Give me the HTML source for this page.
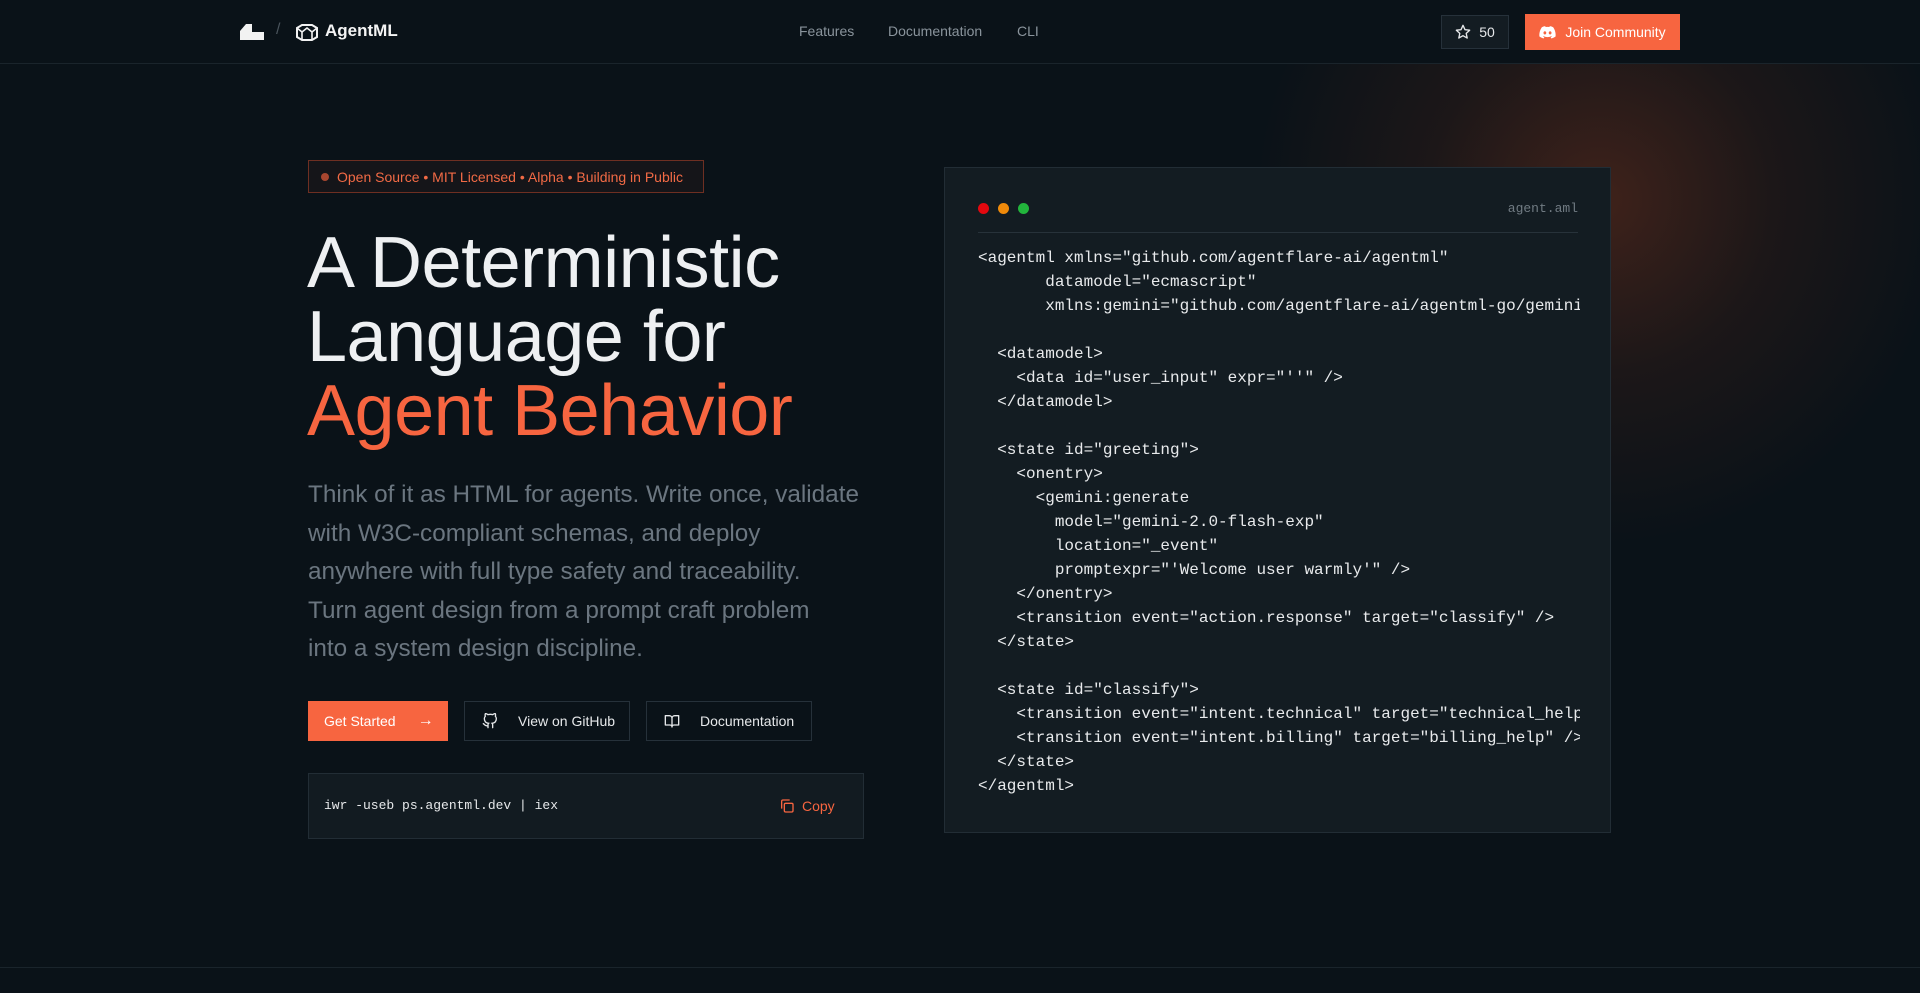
<!DOCTYPE html>
<html><head><meta charset="utf-8"><style>
*{margin:0;padding:0;box-sizing:border-box}
body{width:1920px;height:993px;overflow:hidden;background:#0a1218;font-family:"Liberation Sans",sans-serif;color:#e6e8ea;position:relative}
.glow{position:absolute;left:1250px;top:-150px;width:700px;height:700px;border-radius:50%;background:radial-gradient(circle,rgba(150,60,30,.38) 0%,rgba(110,45,25,.18) 35%,rgba(10,18,24,0) 70%)}
.nav{position:absolute;left:0;top:0;width:1920px;height:64px;border-bottom:1px solid #1a242b;background:#0a1218}
.mono{font-family:"Liberation Mono",monospace}
.abs{position:absolute}
.navlink{position:absolute;top:23px;font-size:14px;color:#8a949c}
.btn{position:absolute;display:flex;align-items:center;font-size:14px}
.code{position:absolute;left:978px;top:246px;font-size:16px;line-height:24px;color:#e8eaec;white-space:pre;width:602px;overflow:hidden}
</style></head><body>
<div class="glow"></div>
<div class="nav">
 <svg class="abs" style="left:240px;top:24px" width="24" height="16" viewBox="0 0 24 16"><path d="M0 16V7L6 0h6v8h6v8z" fill="#f2f2f2"/><rect x="18" y="8" width="6" height="8" fill="#f2f2f2"/></svg>
 <div class="abs" style="left:276px;top:21px;color:#4a545c;font-size:16px">/</div>
 <svg class="abs" style="left:295px;top:24px" width="24" height="17" viewBox="0 0 24 17"><path d="M2 4L7 1h10l5 3v9l-5 3H7l-5-3z" fill="none" stroke="#f2f2f2" stroke-width="2"/><path d="M2 4l5 4 5-4 5 4 5-4M7 8v8M17 8v8" fill="none" stroke="#f2f2f2" stroke-width="1.6"/></svg>
 <div class="abs" style="left:325px;top:21px;font-size:17px;font-weight:bold;color:#f4f4f4">AgentML</div>
 <div class="navlink" style="left:799px">Features</div>
 <div class="navlink" style="left:888px">Documentation</div>
 <div class="navlink" style="left:1017px">CLI</div>
 <div class="btn" style="left:1441px;top:15px;width:68px;height:34px;border:1px solid #26313a;background:#131c22;justify-content:center;gap:8px;color:#e6e8ea">
  <svg width="16" height="16" viewBox="0 0 24 24"><path d="M12 2l3 6.5 7 .8-5.2 4.8 1.5 7L12 17.5 5.7 21l1.5-7L2 9.3l7-.8z" fill="none" stroke="#e6e8ea" stroke-width="2" stroke-linejoin="round"/></svg>50</div>
 <div class="btn" style="left:1525px;top:14px;width:155px;height:36px;background:#f76540;justify-content:center;gap:9px;color:#fff">
  <svg width="17" height="13" viewBox="0 0 24 18"><path d="M20 1.5A19 19 0 0 0 15.3 0l-.6 1.2a18 18 0 0 0-5.4 0L8.7 0A19 19 0 0 0 4 1.5C1 6 .2 10.3.6 14.6A19 19 0 0 0 6.4 17.5l1.2-2a12 12 0 0 1-1.9-.9l.5-.4a13.5 13.5 0 0 0 11.6 0l.5.4-1.9.9 1.2 2a19 19 0 0 0 5.8-2.9c.5-5-.8-9.3-3.4-13.1zM8.3 11.9c-1.1 0-2-1-2-2.3s.9-2.3 2-2.3 2 1 2 2.3-.9 2.3-2 2.3zm7.4 0c-1.1 0-2-1-2-2.3s.9-2.3 2-2.3 2 1 2 2.3-.9 2.3-2 2.3z" fill="#fff"/></svg>Join Community</div>
</div>

<div class="abs" style="left:308px;top:160px;width:396px;height:33px;border:1px solid #6e2f22;background:#151519;display:flex;align-items:center;padding-left:12px;gap:8px;font-size:14px;color:#f26a45"><span style="width:8px;height:8px;border-radius:50%;background:#a8462f;display:inline-block"></span>Open Source • MIT Licensed • Alpha • Building in Public</div>

<div class="abs" style="left:307px;top:226px;font-size:72px;line-height:74px;color:#eef0f2;letter-spacing:-0.5px">A Deterministic<br>Language for<br><span style="color:#f76540">Agent Behavior</span></div>

<div class="abs" style="left:308px;top:476px;white-space:nowrap;font-size:24.3px;line-height:38.5px;color:#6b7680">Think of it as HTML for agents. Write once, validate<br>with W3C-compliant schemas, and deploy<br>anywhere with full type safety and traceability.<br>Turn agent design from a prompt craft problem<br>into a system design discipline.</div>

<div class="btn" style="left:308px;top:701px;width:140px;height:40px;background:#f76540;color:#fff;padding-left:16px;gap:22px">Get Started <span style="font-size:16px">→</span></div>
<div class="btn" style="left:464px;top:701px;width:166px;height:40px;border:1px solid #26313a;color:#e6e8ea;padding-left:17px;gap:20px">
 <svg width="16" height="16" viewBox="0 0 24 24"><path d="M9 19c-5 1.5-5-2.5-7-3m14 6v-3.9a3.4 3.4 0 0 0-.9-2.6c3.1-.4 6.4-1.5 6.4-7A5.4 5.4 0 0 0 20 4.8 5 5 0 0 0 19.9 1S18.7.6 16 2.5a13.4 13.4 0 0 0-7 0C6.3.6 5.1 1 5.1 1A5 5 0 0 0 5 4.8 5.4 5.4 0 0 0 3.5 8.5c0 5.4 3.3 6.6 6.4 7a3.4 3.4 0 0 0-.9 2.6V22" fill="none" stroke="#e6e8ea" stroke-width="2" stroke-linecap="round"/></svg>View on GitHub</div>
<div class="btn" style="left:646px;top:701px;width:166px;height:40px;border:1px solid #26313a;color:#e6e8ea;padding-left:17px;gap:20px">
 <svg width="16" height="16" viewBox="0 0 24 24"><path d="M2 4h6a4 4 0 0 1 4 4v13a3 3 0 0 0-3-3H2zM22 4h-6a4 4 0 0 0-4 4v13a3 3 0 0 1 3-3h7z" fill="none" stroke="#e6e8ea" stroke-width="2" stroke-linejoin="round"/></svg>Documentation</div>

<div class="abs" style="left:308px;top:773px;width:556px;height:66px;border:1px solid #222d35;background:#121b21">
 <div class="abs mono" style="left:15px;top:24px;font-size:13px;color:#e6e8ea">iwr -useb ps.agentml.dev | iex</div>
 <div class="abs" style="left:470px;top:24px;display:flex;gap:7px;align-items:center;font-size:14px;color:#f76540">
  <svg width="16" height="16" viewBox="0 0 24 24"><rect x="8" y="8" width="13" height="13" rx="2" fill="none" stroke="#f76540" stroke-width="2"/><path d="M4 16V5a2 2 0 0 1 2-2h10" fill="none" stroke="#f76540" stroke-width="2"/></svg>Copy</div>
</div>

<div class="abs" style="left:944px;top:167px;width:667px;height:666px;border:1px solid #222d35;background:#131c22">
 <span class="abs" style="left:33px;top:35px;width:11px;height:11px;border-radius:50%;background:#e3080f"></span>
 <span class="abs" style="left:53px;top:35px;width:11px;height:11px;border-radius:50%;background:#f08a0a"></span>
 <span class="abs" style="left:73px;top:35px;width:11px;height:11px;border-radius:50%;background:#22b53c"></span>
 <div class="abs mono" style="right:32px;top:33px;font-size:13px;color:#717b83">agent.aml</div>
 <div class="abs" style="left:33px;top:64px;width:600px;height:1px;background:#27323a"></div>
</div>
<div class="code mono">&lt;agentml xmlns="github.com/agentflare-ai/agentml"
       datamodel="ecmascript"
       xmlns:gemini="github.com/agentflare-ai/agentml-go/gemini"

  &lt;datamodel&gt;
    &lt;data id="user_input" expr="''" /&gt;
  &lt;/datamodel&gt;

  &lt;state id="greeting"&gt;
    &lt;onentry&gt;
      &lt;gemini:generate
        model="gemini-2.0-flash-exp"
        location="_event"
        promptexpr="'Welcome user warmly'" /&gt;
    &lt;/onentry&gt;
    &lt;transition event="action.response" target="classify" /&gt;
  &lt;/state&gt;

  &lt;state id="classify"&gt;
    &lt;transition event="intent.technical" target="technical_help" /&gt;
    &lt;transition event="intent.billing" target="billing_help" /&gt;
  &lt;/state&gt;
&lt;/agentml&gt;</div>

<div class="abs" style="left:0;top:967px;width:1920px;height:1px;background:#1a242b"></div>
</body></html>
